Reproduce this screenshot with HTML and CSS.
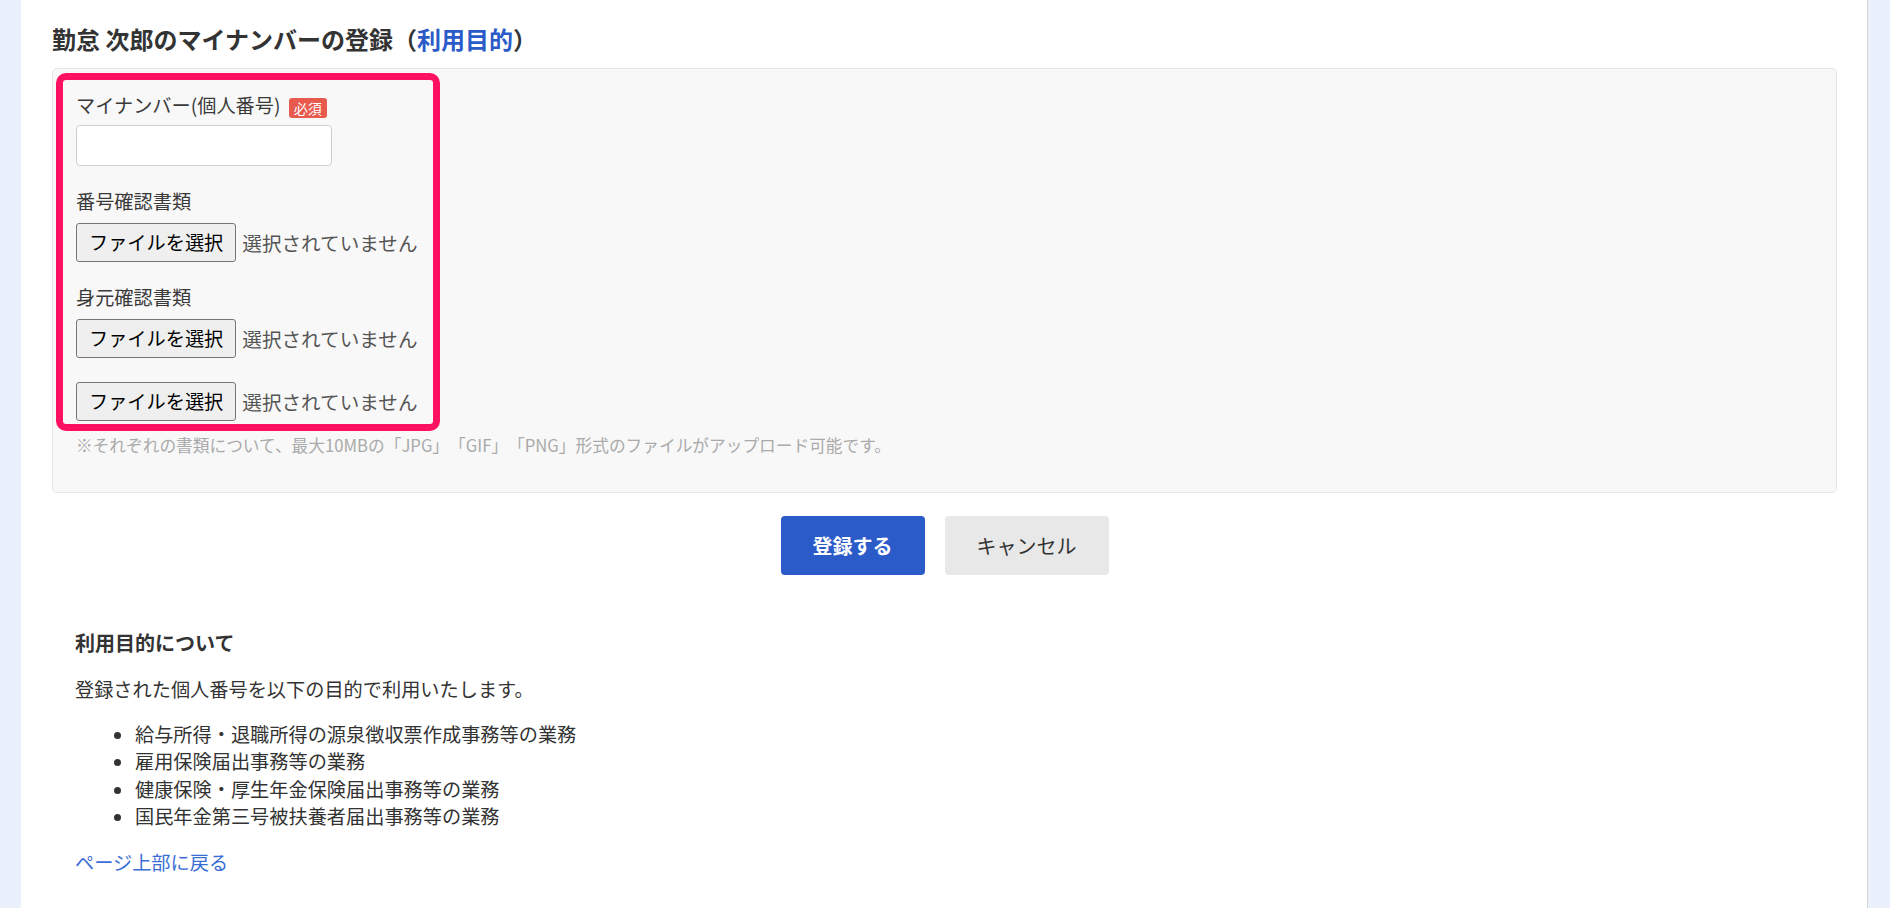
FILE: index.html
```html
<!DOCTYPE html>
<html lang="ja">
<head>
<meta charset="utf-8">
<title>マイナンバーの登録</title>
<link rel="stylesheet" href="styles.css">
</head>
<body>
<div class="page">
  <h1 class="title">勤怠 次郎のマイナンバーの登録（<a class="title-link" href="#purpose">利用目的</a>）</h1>

  <div class="panel">
    <div class="highlight">
      <div class="group">
        <label class="label">マイナンバー(個人番号) <span class="badge">必須</span></label>
        <input class="text-input" type="text">
      </div>
      <div class="group">
        <div class="label">番号確認書類</div>
        <div class="file-row">
          <button class="file-btn" type="button">ファイルを選択</button>
          <span class="file-name">選択されていません</span>
        </div>
      </div>
      <div class="group last">
        <div class="label">身元確認書類</div>
        <div class="file-row">
          <button class="file-btn" type="button">ファイルを選択</button>
          <span class="file-name">選択されていません</span>
        </div>
        <div class="file-row extra">
          <button class="file-btn" type="button">ファイルを選択</button>
          <span class="file-name">選択されていません</span>
        </div>
      </div>
    </div>
    <p class="note">※それぞれの書類について、最大10MBの「JPG」「GIF」「PNG」形式のファイルがアップロード可能です。</p>
  </div>

  <div class="actions">
    <button class="btn btn-primary" type="button">登録する</button>
    <button class="btn btn-cancel" type="button">キャンセル</button>
  </div>

  <section class="purpose" id="purpose">
    <h2 class="purpose-title">利用目的について</h2>
    <p class="purpose-text">登録された個人番号を以下の目的で利用いたします。</p>
    <ul class="purpose-list">
      <li>給与所得・退職所得の源泉徴収票作成事務等の業務</li>
      <li>雇用保険届出事務等の業務</li>
      <li>健康保険・厚生年金保険届出事務等の業務</li>
      <li>国民年金第三号被扶養者届出事務等の業務</li>
    </ul>
    <a class="top-link" href="#">ページ上部に戻る</a>
  </section>
</div>
</body>
</html>
```

FILE: styles.css
```css
* {
  box-sizing: border-box;
}

html, body {
  margin: 0;
  padding: 0;
}

body {
  background: #eaf1fd;
  font-family: "Noto Sans CJK JP", "Noto Sans", "Liberation Sans", sans-serif;
  font-size: 19.2px;
  line-height: 27px;
  color: #333;
  text-spacing-trim: space-all;
}

.page {
  margin: 0 22px 0 21px;
  min-height: 908px;
  background: #fff;
  border-right: 1px solid #d6d6d6;
  padding: 22px 30px 20px 31px;
}

.title {
  margin: 0 0 12px;
  font-size: 24px;
  line-height: 34px;
  font-weight: bold;
  color: #333;
}

.title-link {
  color: #2a5bc8;
  text-decoration: none;
}

.panel {
  background: #f8f8f8;
  border: 1px solid #e6e6e6;
  border-radius: 5px;
  padding: 4px 0 36px 3px;
}

.highlight {
  width: fit-content;
  border: 7px solid #ff1060;
  border-radius: 10px;
  padding: 12px 16px 3px 13px;
}

.group {
  margin-bottom: 22px;
}

.group.last {
  margin-bottom: 0;
}

.label {
  display: block;
  line-height: 27px;
  margin-bottom: 8px;
  color: #3a3a3a;
}

.group:first-child .label {
  margin-bottom: 6px;
}

.badge {
  display: inline-block;
  vertical-align: -1px;
  margin-left: 4px;
  height: 20px;
  line-height: 20px;
  padding: 0 5px;
  background: #e8594e;
  color: #fff;
  font-size: 14px;
  border-radius: 3px;
}

.text-input {
  display: block;
  width: 256px;
  height: 41px;
  border: 1px solid #cfcfcf;
  border-radius: 4px;
  background: #fff;
  font: inherit;
  padding: 0 8px;
}

.file-row {
  display: flex;
  align-items: center;
  gap: 6px;
  height: 39px;
}

.file-row.extra {
  margin-top: 24px;
}

.file-btn {
  height: 39px;
  padding: 0 12px;
  background: #efefef;
  border: 1px solid #767676;
  border-radius: 3px;
  font-family: inherit;
  font-size: 19.2px;
  color: #000;
  line-height: 1;
}

.file-name {
  color: #555;
  font-size: 19.6px;
}

.note {
  margin: 3px 0 0 20px;
  font-size: 16.7px;
  line-height: 22px;
  color: #aaa;
}

.actions {
  display: flex;
  justify-content: center;
  gap: 20px;
  margin-top: 23px;
}

.btn {
  height: 59px;
  padding: 0 32px;
  border: none;
  border-radius: 4px;
  font-family: inherit;
  font-size: 20px;
  line-height: 1;
}

.btn-primary {
  background: #2a5bc8;
  color: #fff;
  font-weight: bold;
}

.btn-cancel {
  background: #e8e8e8;
  color: #333;
}

.purpose {
  padding-left: 23px;
  margin-top: 54px;
}

.purpose-title {
  margin: 0;
  font-size: 20px;
  line-height: 28px;
  font-weight: bold;
  color: #333;
}

.purpose-text {
  margin: 19px 0 0;
}

.purpose-list {
  margin: 18px 0 0;
  padding-left: 60px;
  line-height: 27.3px;
}

.top-link {
  display: inline-block;
  margin-top: 19px;
  color: #3a6ed6;
  text-decoration: none;
}
```
